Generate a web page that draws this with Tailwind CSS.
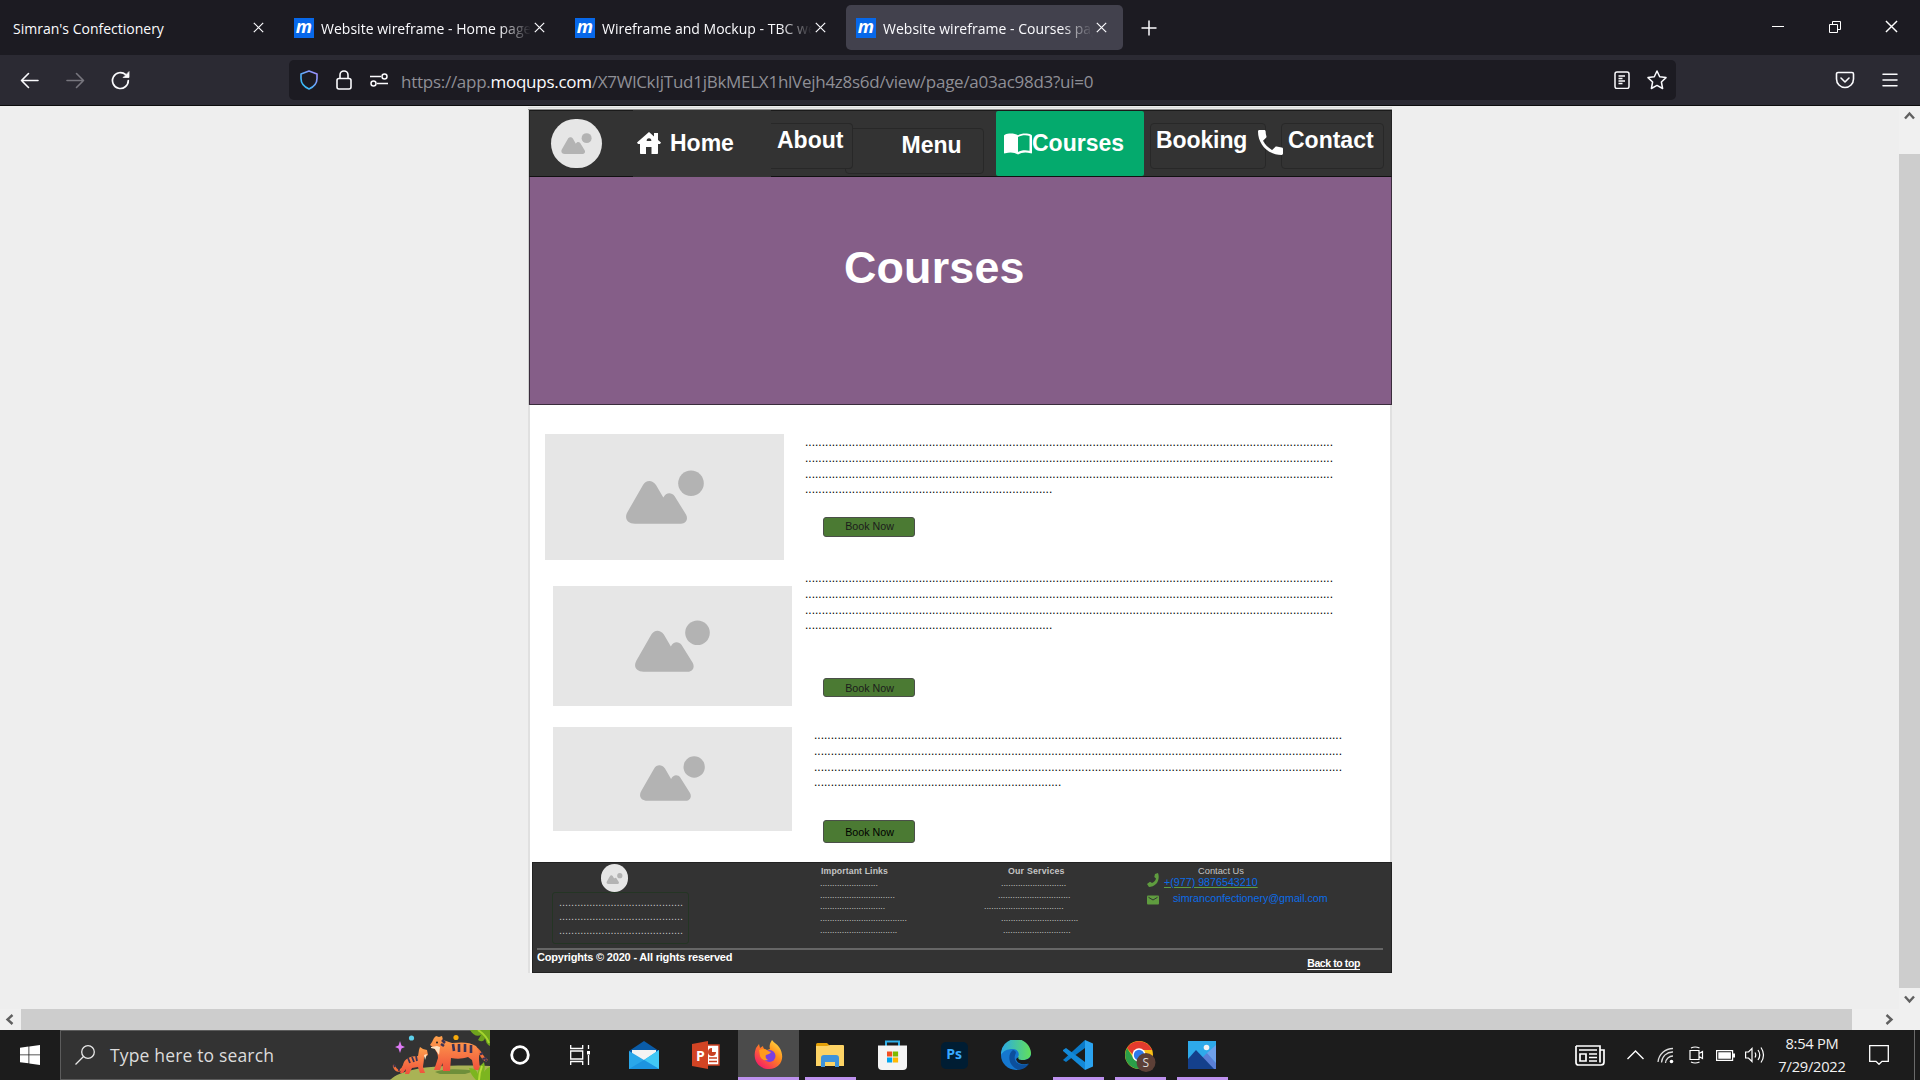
<!DOCTYPE html>
<html lang="en">
<head>
<meta charset="utf-8">
<title>Website wireframe - Courses page</title>
<script src="https://cdn.jsdelivr.net/npm/@tailwindcss/browser@4"></script>
</head>
<body class="w-[1920px] h-[1080px] overflow-hidden flex flex-col bg-[#eeeeee] font-['Open_Sans','Noto_Sans',sans-serif]">
<svg class="hidden">
  <symbol id="pic" viewBox="0 0 78 54"><circle cx="65" cy="13.2" r="12.8"/><path d="M17 15C20 10 26 9.500 30 15L37.300 27.500C40 22 45.500 22 48.500 26L60 44.500C62.500 49 60 53.800 55 53.800H9C1 53.800-2 48 1.500 42Z"/></symbol>
  <symbol id="x" viewBox="0 0 11 11"><path d="M.8.8l9.400 9.400M10.200.8L.8 10.200" fill="none" stroke="currentColor" stroke-width="1.200"/></symbol>
  <symbol id="phone" viewBox="3 3 18 18"><path d="M6.620 10.790c1.440 2.830 3.760 5.140 6.590 6.590l2.200-2.200c.27-.27.67-.36 1.020-.24 1.120.37 2.330.57 3.570.57.55 0 1 .45 1 1V20c0 .55-.45 1-1 1-9.390 0-17-7.610-17-17 0-.55.45-1 1-1h3.500c.55 0 1 .45 1 1 0 1.250.2 2.450.57 3.570.11.35.03.74-.25 1.020l-2.200 2.200z"/></symbol>
</svg>

<!-- tab strip -->
<div class="h-[55px] shrink-0 bg-[#1c1b22] flex items-start pt-[5px] text-[#fbfbfe] text-[14px]">
  <div class="w-[281px] h-[45px] flex items-center pl-[13px]">
    <span class="pt-[2px] w-[240px] whitespace-nowrap">Simran's Confectionery</span>
    <svg class="w-[11px] h-[11px]"><use href="#x"/></svg>
  </div>
  <div class="w-[281px] h-[45px] flex items-center pl-[13px]">
    <span class="w-5 h-5 bg-[#0768ea] text-white font-bold italic text-[18px] leading-[16px] text-center">m</span>
    <span class="ml-[7px] pt-[2px] w-[213px] whitespace-nowrap overflow-hidden tracking-[0.020px] [mask-image:linear-gradient(to_right,black_178px,transparent_210px)]">Website wireframe - Home page</span>
    <svg class="w-[11px] h-[11px]"><use href="#x"/></svg>
  </div>
  <div class="w-[284px] h-[45px] flex items-center pl-[13px]">
    <span class="w-5 h-5 bg-[#0768ea] text-white font-bold italic text-[18px] leading-[16px] text-center">m</span>
    <span class="ml-[7px] pt-[2px] w-[213px] whitespace-nowrap overflow-hidden tracking-[0.020px] [mask-image:linear-gradient(to_right,black_178px,transparent_210px)]">Wireframe and Mockup - TBC website</span>
    <svg class="w-[11px] h-[11px]"><use href="#x"/></svg>
  </div>
  <div class="w-[277px] h-[45px] flex items-center pl-[10px] bg-[#42414d] rounded-[5px]">
    <span class="w-5 h-5 bg-[#0768ea] text-white font-bold italic text-[18px] leading-[16px] text-center">m</span>
    <span class="ml-[7px] pt-[2px] w-[213px] whitespace-nowrap overflow-hidden tracking-[0.020px] [mask-image:linear-gradient(to_right,black_178px,transparent_210px)]">Website wireframe - Courses page</span>
    <svg class="w-[11px] h-[11px]"><use href="#x"/></svg>
  </div>
  <svg class="ml-[18px] mt-[15px] w-4 h-4" viewBox="0 0 16 16"><path d="M8 .5v15M.5 8h15" stroke="#fbfbfe" stroke-width="1.500"/></svg>
  <div class="ml-auto mr-[22px] mt-[15px] flex gap-[45px] h-[14px]">
    <svg class="w-3 h-[14px]"><path d="M0 6.500h12" stroke="#fff"/></svg>
    <svg class="w-3 h-[14px]" fill="none" stroke="#fff"><path d="M.5 4.500h8v8h-8zM3.500 4V1.500h8v8H9"/></svg>
    <svg class="w-[13px] h-[13px] -ml-px text-white"><use href="#x"/></svg>
  </div>
</div>

<!-- toolbar -->
<div class="h-[51px] shrink-0 bg-[#2b2a33] border-b border-[#0c0c0d] flex items-center">
  <div class="w-[289px] pl-[20px] flex gap-[26px] items-center">
    <svg class="w-[19px] h-[19px]" viewBox="0 0 19 19" fill="none" stroke="#fbfbfe" stroke-width="1.600" stroke-linecap="round" stroke-linejoin="round"><path d="M18 9.500H1.500M8.500 2.500l-7 7 7 7"/></svg>
    <svg class="ml-px w-[19px] h-[19px]" viewBox="0 0 19 19" fill="none" stroke="#77767e" stroke-width="1.600" stroke-linecap="round" stroke-linejoin="round"><path d="M1 9.500h16.500M10.500 2.500l7 7-7 7"/></svg>
    <svg class="w-[19px] h-[19px]" viewBox="0 0 19 19" fill="none" stroke="#fbfbfe" stroke-width="1.700" stroke-linecap="round"><path d="M17.300 9.500a7.900 7.900 0 1 1-2.600-5.800"/><path d="M18 1v5.500h-5.500z" fill="#fbfbfe" stroke-width=".8"/></svg>
  </div>
  <div class="w-[1387px] h-10 bg-[#1c1b22] rounded-[5px] flex items-center pl-[10px]">
    <svg class="w-5 h-5" viewBox="0 0 20 20" fill="none"><defs><linearGradient id="sh" x1="0" y1="1" x2="1" y2="0"><stop offset="0" stop-color="#20c5f5"/><stop offset="1" stop-color="#a68bff"/></linearGradient></defs><path d="M10 1l8 3v4.500c0 5-3.500 8.500-8 10.500-4.500-2-8-5.500-8-10.500V4z" stroke="url(#sh)" stroke-width="1.600" stroke-linejoin="round"/></svg>
    <svg class="ml-[16px] w-[18px] h-5" viewBox="0 0 18 20" fill="none" stroke="#fbfbfe" stroke-width="1.600"><rect x="2" y="8.500" width="14" height="10.500" rx="2"/><path d="M5 8.500V5a4 4 0 0 1 8 0v3.500"/></svg>
    <svg class="ml-[17px] w-[18px] h-[14px]" viewBox="0 0 18 14" fill="none" stroke="#fbfbfe" stroke-width="1.500"><path d="M0 3.500h11M7 10.500h11"/><circle cx="14.500" cy="3.500" r="2.500"/><circle cx="3.500" cy="10.500" r="2.500"/></svg>
    <span class="ml-[13px] pt-[4px] w-[1180px] whitespace-nowrap text-[17px] tracking-[-0.265px] text-[#8f8f96]">https://app.<span class="text-[#fbfbfe]">moqups.com</span>/X7WlCkIjTud1jBkMELX1hlVejh4z8s6d/view/page/a03ac98d3?ui=0</span>
    <svg class="ml-[33px] w-4 h-[18px]" viewBox="0 0 16 18" fill="none" stroke="#fbfbfe" stroke-width="1.500"><rect x="1" y="1" width="14" height="16.500" rx="2"/><path d="M4.500 5H11M4.500 7.500h4M4.500 10H11M4.500 12.500h4" stroke-width="1.300"/></svg>
    <svg class="ml-[17px] w-5 h-5" viewBox="0 0 20 20" fill="none" stroke="#fbfbfe" stroke-width="1.500" stroke-linejoin="round"><path d="M10 1l2.700 5.800 6.300.8-4.600 4.400 1.200 6.500-5.600-3.100-5.600 3.100 1.200-6.500L1 7.600l6.300-.8z"/></svg>
  </div>
  <svg class="ml-[159px] w-5 h-[18px]" viewBox="0 0 20 18" fill="none" stroke="#fbfbfe" stroke-width="1.600" stroke-linecap="round" stroke-linejoin="round"><path d="M3 1.500h14a1.500 1.500 0 0 1 1.500 1.500v5a8.500 8.500 0 0 1-17 0V3A1.500 1.500 0 0 1 3 1.500zM6 7l4 4 4-4"/></svg>
  <svg class="ml-[27px] w-4 h-[14px]" viewBox="0 0 16 14" stroke="#fbfbfe" stroke-width="1.500" stroke-linecap="round"><path d="M1 1.200h14M1 7h14M1 12.800h14"/></svg>
</div>

<!-- viewport -->
<div class="h-[903px] shrink-0 flex">
  <div class="w-[1899px] pl-[528px]">
    <main class="w-[864px] h-[868px] font-['Liberation_Sans',Arial,sans-serif]">
      <div class="h-[4px] w-[864px] flex flex-col justify-end">
        <div class="h-px bg-[#dcdcdc]"></div>
        <div class="mt-px h-px bg-[#8f8f8f]"></div>
      </div>
      <!-- header -->
      <div class="w-[864px] border-l border-[#cfcfcf]">
        <nav class="h-[67px] w-[863px] bg-[#333] border border-t-[#1a1a1a] border-x-[#222] border-b-[#111] flex text-white font-bold text-[23px] leading-[33px]">
          <div class="shrink-0 ml-[21px] mt-[8px] w-[51px] h-[49px] rounded-full bg-[#e6e6e6] flex justify-center pt-[14px]"><svg class="w-[31px] h-[21px] fill-[#b3b3b3]"><use href="#pic"/></svg></div>
          <div class="shrink-0 ml-[31px] -my-px w-[138px] bg-[#333] relative z-20 flex items-start pl-[4px]">
            <svg class="mt-[22px] w-[24px] h-[22px] fill-white" viewBox="0 0 24 22"><path d="M12 0L0 10.500l1 1.500h2v9c0 .6.400 1 1 1h5v-7h5.500v7H20c.6 0 1-.4 1-1v-9h2l1-1.500-3-2.600V1h-4v3.600zM12 6.200a2.300 2.300 0 0 1 2.300 2.800H9.700A2.300 2.300 0 0 1 12 6.200z" fill-rule="evenodd"/></svg>
            <span class="ml-[9px] mt-[17px]">Home</span>
          </div>
          <div class="shrink-0 mt-[12px] w-[82px] h-[46px] bg-[#333] border border-l-0 border-[#282828] rounded-r-[4px] pl-[6px] relative z-10">About</div>
          <div class="shrink-0 -ml-[8px] mt-[17px] w-[139px] h-[46px] border border-[#282828] rounded-[4px] pl-[55.500px]">Menu</div>
          <div class="shrink-0 ml-[12px] w-[148px] h-[65px] bg-[#04aa6d] rounded-[2px] flex items-start pl-[8px]">
            <svg class="mt-[22px] w-[28px] h-[22px]" viewBox="0 0 28 22"><path d="M14 2.300C11 .2 4 .2 1.200 1.600 0 2.200 0 2.600 0 3.500v16c0 1.300.8 1 1.500.8 4-1.500 9-1.200 12.500 1.200 3.500-2.400 8.500-2.700 12.500-1.200.7.200 1.500.5 1.500-.8v-16c0-.9 0-1.300-1.200-1.900C24 .2 17 .2 14 2.300zm0 1.700c3.500-2 8.500-2.200 11.500-1v14.700c-4-1-8.500-.7-11.500 1.300z" fill="#fff" fill-rule="evenodd"/></svg>
            <span class="mt-[16px]">Courses</span>
          </div>
          <div class="shrink-0 ml-[6px] mt-[12px] w-[116px] h-[46px] border border-[#282828] rounded-[4px] pl-[5px] tracking-[-0.100px]">Booking</div>
          <svg class="shrink-0 -ml-[8px] mt-[19px] w-[25px] h-[25px] fill-white relative z-10"><use href="#phone"/></svg>
          <div class="shrink-0 -ml-[2px] mt-[12px] w-[103px] h-[46px] border border-[#282828] rounded-[4px] pl-[6px]">Contact</div>
        </nav>
        <h1 class="h-[228px] w-[863px] bg-[#855e88] border-x border-b border-[#3a2c3c] pl-[314px] pt-[62px] text-white font-bold text-[44.800px] leading-[56px] tracking-[0.200px]">Courses</h1>
      </div>

      <!-- course list -->
      <div class="w-[864px] h-[457px] bg-white border-l-2 border-r-2 border-[#e0e0e0] pt-[29px] text-black text-[12px]">
        <section class="h-[136px] flex">
          <div class="ml-[15px] w-[239px] h-[126px] bg-[#e6e6e6] pl-[81px] pt-[36px]"><svg class="w-[78px] h-[54px] fill-[#b3b3b3]"><use href="#pic"/></svg></div>
          <div class="ml-[21px]">
            <div class="w-[530px] h-[63px] leading-[16px] tracking-[0.008px]">
              <p data-dots="158"></p><p data-dots="158"></p><p data-dots="158"></p><p class="-mt-px" data-dots="74"></p>
            </div>
            <button class="block ml-[18px] mt-[20px] w-[92px] h-[20px] bg-[#4b7a33] border border-[#4a4f48] rounded-[3px] text-[10.700px] leading-[16px] pl-px pb-[2px] text-[#1c1c1c]">Book Now</button>
          </div>
        </section>
        <section class="h-[157px] flex">
          <div class="ml-[23px] mt-[16px] w-[239px] h-[120px] bg-[#e6e6e6] pl-[82px] pt-[34px]"><svg class="w-[75px] h-[52px] fill-[#b3b3b3]"><use href="#pic"/></svg></div>
          <div class="ml-[13px]">
            <div class="w-[530px] h-[63px] leading-[16px] tracking-[0.008px]">
              <p data-dots="158"></p><p data-dots="158"></p><p data-dots="158"></p><p class="-mt-px" data-dots="74"></p>
            </div>
            <button class="block ml-[18px] mt-[45px] w-[92px] h-[19px] bg-[#4b7a33] border border-[#4a4f48] rounded-[3px] text-[10.700px] leading-[18px] pl-px text-[#1c1c1c]">Book Now</button>
          </div>
        </section>
        <section class="h-[135px] flex">
          <div class="ml-[23px] w-[239px] h-[104px] bg-[#e6e6e6] pl-[87px] pt-[29px]"><svg class="w-[65px] h-[45px] fill-[#b3b3b3]"><use href="#pic"/></svg></div>
          <div class="ml-[22px]">
            <div class="w-[530px] h-[63px] leading-[16px] tracking-[0.008px]">
              <p data-dots="158"></p><p data-dots="158"></p><p data-dots="158"></p><p class="-mt-px" data-dots="74"></p>
            </div>
            <button class="block ml-[9px] mt-[30px] w-[92px] h-[23px] bg-[#4b7a33] border border-[#4a4f48] rounded-[3px] text-[10.700px] leading-[22px] pl-px text-black">Book Now</button>
          </div>
        </section>
      </div>

      <!-- footer -->
      <div class="w-[864px] border-l-2 border-[#e0e0e0] pl-[2px] bg-white">
        <footer class="w-[860px] h-[111px] bg-[#333] border border-[#222] text-[#c4c4c4]">
          <div class="h-[85px] flex text-[8.700px] leading-[12px]">
            <div class="w-[287px] pl-[19px]">
              <div class="ml-[49px] mt-[1px] w-[27px] h-[28px] rounded-full bg-[#e6e6e6] flex justify-center pt-[9px]"><svg class="w-[17px] h-[11px] fill-[#b3b3b3]"><use href="#pic"/></svg></div>
              <div class="w-[137px] h-[52px] border border-[#243524] rounded-[3px] pl-[6px] pt-[1.500px] text-[10.900px] leading-[14px]">
                <p data-dots="41"></p><p data-dots="41"></p><p data-dots="41"></p>
              </div>
            </div>
            <div class="w-[164px] pt-[2px] leading-[11.700px]">
              <h2 class="font-bold text-[8.700px] leading-[12px] tracking-[0.120px] pl-px pb-[1px]">Important Links</h2>
              <p data-dots="24"></p><p data-dots="31"></p><p data-dots="27"></p><p data-dots="36"></p><p data-dots="32"></p>
            </div>
            <div class="w-[163px] pt-[2px] leading-[11.700px]">
              <h2 class="font-bold text-[8.800px] leading-[12px] tracking-[0.200px] pl-[24px] pb-[1px]">Our Services</h2>
              <p class="pl-[17px]" data-dots="27"></p><p class="pl-[14px]" data-dots="30"></p><p data-dots="33"></p><p class="pl-[17px]" data-dots="32"></p><p class="pl-[19px]" data-dots="28"></p>
            </div>
            <div class="pt-[2px]">
              <h2 class="pl-[51px] text-[9.300px]">Contact Us</h2>
              <div class="flex h-[14px] text-[10.700px] leading-[11px] text-[#0b6ce8]">
                <svg class="-mt-[4px] w-[12px] h-[14px] fill-[#5f9c3f]" viewBox="0 0 12 14"><path d="M8 1l3-1c1.500 4 .5 8-1.500 10.500C7.500 13 4 14 2 14L0 11l3-2.300 2 1.300C7 9 8.500 7.500 9 5.500L7.300 4z"/></svg>
                <a class="ml-[5px] underline decoration-[#5f9c3f] decoration-1 underline-offset-1 whitespace-nowrap">+(977) 9876543210</a>
              </div>
              <div class="flex mt-[1px] text-[10.700px] leading-[12px] text-[#0b6ce8]">
                <svg class="mt-[3px] w-[12px] h-[10px]" viewBox="0 0 12 10"><rect y=".5" width="12" height="9" rx="1" fill="#5f9c3f"/><path d="M1.500 2.300L6 5l4.500-2.700" fill="none" stroke="#333"/></svg>
                <a class="ml-[14px] tracking-[-0.020px]">simranconfectionery@gmail.com</a>
              </div>
            </div>
          </div>
          <div class="ml-[4px] w-[846px] h-[2px] bg-[#666]"></div>
          <div class="flex justify-between pl-[4px] pr-[31px] text-white font-bold text-[11px] leading-[12px]">
            <span class="mt-[1px] tracking-[-0.190px]">Copyrights © 2020 - All rights reserved</span>
            <a class="mt-[7px] text-[10.500px] tracking-[-0.400px] underline underline-offset-[1.500px]">Back to top</a>
          </div>
        </footer>
      </div>
    </main>
  </div>
  <div class="w-[21px] bg-[#f0f0f0] flex flex-col items-center">
    <svg class="mt-[5px] w-[11px] h-[9px]" viewBox="0 0 11 9" fill="none" stroke="#606060" stroke-width="2.400"><path d="M1 7.500L5.500 2.500 10 7.500"/></svg>
    <div class="mt-[34px] w-full h-[834px] bg-[#cdcdcd]"></div>
    <svg class="mt-[7px] w-[11px] h-[9px]" viewBox="0 0 11 9" fill="none" stroke="#606060" stroke-width="2.400"><path d="M1 1.500L5.500 6.500 10 1.500"/></svg>
  </div>
</div>
<div class="h-[21px] shrink-0 bg-[#f0f0f0] flex items-center">
  <svg class="ml-[5px] w-[9px] h-[11px]" viewBox="0 0 9 11" fill="none" stroke="#606060" stroke-width="2.400"><path d="M7.500 1L2.500 5.500 7.500 10"/></svg>
  <div class="ml-[7px] w-[1831px] h-full bg-[#cdcdcd]"></div>
  <svg class="ml-[33px] w-[9px] h-[11px]" viewBox="0 0 9 11" fill="none" stroke="#606060" stroke-width="2.400"><path d="M1.500 1L6.500 5.500 1.500 10"/></svg>
</div>

<!-- taskbar -->
<div class="h-[50px] shrink-0 bg-[#1c1c1c] flex items-center text-white">
  <div class="w-[60px] flex justify-center"><svg class="w-5 h-5" viewBox="0 0 20 20" fill="#fff"><path d="M0 2.800L8.500 1.600V9.500H0zM9.300 1.500L20 0v9.500H9.300zM0 10.300h8.500v8L0 17.200zM9.300 10.300H20V20L9.300 18.400z"/></svg></div>
  <div class="w-[430px] h-[50px] bg-[#333] border border-[#5c5c5c] border-r-0 flex items-center pl-[14px]">
    <svg class="w-5 h-5" viewBox="0 0 20 20" fill="none" stroke="#e8e8e8" stroke-width="1.300"><circle cx="13" cy="7" r="6.300"/><path d="M8.500 11.500L.5 19.500"/></svg>
    <span class="ml-[15px] w-[280px] text-[17.500px] text-[#dcdcdc] tracking-[0.160px]">Type here to search</span>
    <svg class="w-[100px] h-[50px]" viewBox="0 0 100 50">
      <defs><linearGradient id="tg" x1="0" y1="0" x2="0" y2="1"><stop offset="0" stop-color="#ffa34d"/><stop offset="1" stop-color="#f0503c"/></linearGradient></defs>
      <path d="M0 50C12 39 40 34 100 36V50z" fill="#a9b355"/><path d="M45 42c10-4 30-3 40-1l-10 3H50z" fill="#6f8f3a"/>
      <path d="M86 19c5 2 5 9 10 11" stroke="#f4713c" stroke-width="3" fill="none" stroke-linecap="round"/><path d="M90 24.500l3-1.500M92.500 29l4-1M95 31l2-1" stroke="#3b3355" stroke-width="2"/>
      <path d="M42 12l2-4 2-2 3 1 3-1 1 4 9 3c10-1 18-1 24 3 4 5 3 10 3 14l1 10h-6l-2-10-4-3c-6 2-11 2-17 1l-1 13h-7l-.5-8-2.500 7h-6l4-12c0-5-2-7-4-10l-4-3z" fill="url(#tg)"/>
      <path d="M41 17l6-1 3 1-1 8-4-6-4-1z" fill="#ffe1c0"/><circle cx="47" cy="12.500" r="1" fill="#222"/>
      <path d="M63 14l1 7M69 14v8M75 14v8M81 15v8M52 10l3 3M51 14l3 2" stroke="#3b3355" stroke-width="2.600"/>
      <path d="M14 36c-3 6-8 6-10 0" stroke="#f4713c" stroke-width="2.400" fill="none" stroke-linecap="round"/><path d="M4 35l1 2M8 40l2-.5" stroke="#3b3355" stroke-width="2"/>
      <path d="M13 35c1-6 7-9 15-9l1-6 1-3 3 2 4 1 1 5-4 2c0 5-1 8-1 10l2 6h-5l-2-6-6 1-3 6h-4l1-5-3 4h-3z" fill="url(#tg)"/>
      <path d="M18 28l2 5M22 27l2 5M26 26l1 5" stroke="#3b3355" stroke-width="1.800"/><path d="M34 25l3-1-2 6z" fill="#ffe1c0"/>
      <path d="M10 11l1.500 4.500L15 17l-3.500 1.500L10 23l-1.500-4.500L5 17l3.500-1.500z" fill="#df7af5"/>
      <circle cx="21.500" cy="8" r="2.600" fill="#5dd0ea"/><circle cx="66" cy="7.500" r="2.600" fill="#f8ab0c"/>
      <path d="M80 0h20v16c-4-2-4-5-5-8-1 4-4 4-7 2l3-5c-4 2-8 0-11-5z" fill="#6ea31d"/><path d="M88 0c6 4 9 7 11 13" stroke="#a5d52d" stroke-width="2" fill="none"/>
      <path d="M79 38c6 0 8 3 9 6 0-6 3-9 6-12 1 4 1 7 0 10 2-3 3-4 6-5v13H86c-3-3-6-7-7-12z" fill="#7cb51f"/><path d="M92 36c-2 5-3 8-3 14" stroke="#b6dd37" stroke-width="2" fill="none"/>
    </svg>
  </div>
  <div class="w-[60px] flex justify-center"><svg class="w-5 h-5"><circle cx="10" cy="10" r="8.300" fill="none" stroke="#fff" stroke-width="2.800"/></svg></div>
  <div class="w-[60px] mr-[3px] flex justify-center"><svg class="w-5 h-5" viewBox="0 0 20 20" fill="none" stroke="#fff" stroke-width="1.300"><path d="M.7 0v3.500h12V0M.7 20v-3.500h12V20M.7 6h12v8H.7zM18.500 0v4M18.500 10v10"/><path d="M17 6h3v3.500h-3z" fill="#fff" stroke="none"/></svg></div>
  <div class="w-[62px] flex justify-center"><svg class="w-[30px] h-[28px]" viewBox="0 0 30 28"><path d="M0 10L15 0l15 10v4H0z" fill="#0a5ca8"/><path d="M3 9h24v8L15 22 3 17z" fill="#f3f3f3"/><path d="M0 10l15 9L30 9v19H0z" fill="#2aa7ea"/><path d="M15 19L30 9v19z" fill="#41c8f5"/><path d="M15 19l15 9H0z" fill="#1c94e0"/></svg></div>
  <div class="w-[62px] flex justify-center"><svg class="w-[28px] h-[28px]" viewBox="0 0 28 28"><path d="M14 4h13v20H14z" fill="#fff" stroke="#c94022" stroke-width="1.500"/><path d="M17 17h8M17 20.500h8" stroke="#c94022" stroke-width="1.500"/><path d="M20 7a4 4 0 1 0 4 4h-4z" fill="#c94022"/><path d="M0 3L16 0v28L0 25z" fill="#d14424"/><text x="4" y="19.500" font-size="14" font-weight="700" fill="#fff">P</text></svg></div>
  <div class="ml-px w-[61px] h-[50px] bg-[#4b4b4b] border-b-[3px] border-[#bd91ee] flex justify-center pt-[10px]"><svg class="w-[30px] h-[29px]" viewBox="0 0 30 29"><defs><linearGradient id="ff" x1="1" y1="0" x2=".2" y2="1"><stop offset="0" stop-color="#fff04a"/><stop offset=".45" stop-color="#ff8a1c"/><stop offset="1" stop-color="#f5156c"/></linearGradient></defs><path d="M18 0c2 3 5 4 7 7 7 10 2 22-10 22S-2 18 2 8l3-4 1 4 3-2c0 2 1 3 4 4l3-1c-1-3 0-6 2-9z" fill="url(#ff)"/><circle cx="15.500" cy="16" r="6" fill="#7a3fe0"/><path d="M5 10c4-2 7-1 9 1l3 1c-1 2-3 2-5 3-1 2 0 4 2 5-4 1-7-1-8-4z" fill="#ff9a1c"/></svg></div>
  <div class="w-[62px] h-[50px] flex justify-center"><div class="w-[51px] h-[50px] border-b-[3px] border-[#bd91ee] flex justify-center pt-[13px]"><svg class="w-[28px] h-[24px]" viewBox="0 0 28 24"><path d="M0 1.500Q0 0 1.500 0H11l3 3H0z" fill="#e3a008"/><path d="M0 3h11l3-1h13q1 0 1 1v20H0z" fill="#fdd365"/><path d="M5 24v-9q0-3 3-3h12q3 0 3 3v9h-4v-5H9v5z" fill="#3e93dc"/></svg></div></div>
  <div class="w-[62px] flex justify-center"><svg class="w-[29px] h-[30px]" viewBox="0 0 29 30"><path d="M8 6V1.500h13V6" fill="none" stroke="#2fb0ea" stroke-width="2"/><path d="M0 5.500h29V26q0 4-4 4H4q-4 0-4-4z" fill="#f4f4f4"/><path d="M9 11.500h5.200v5H9z" fill="#f25022"/><path d="M14.900 11.500h5.200v5h-5.200z" fill="#7fba00"/><path d="M9 17.500h5.200v5H9z" fill="#00a4ef"/><path d="M14.900 17.500h5.200v5h-5.200z" fill="#ffb900"/></svg></div>
  <div class="w-[62px] flex justify-center"><div class="w-[27px] h-[27px] rounded-[5px] bg-[#001d33] text-[#38a8ff] text-[14px] leading-[24px] font-bold text-center">Ps</div></div>
  <div class="w-[62px] flex justify-center"><svg class="w-[30px] h-[30px]" viewBox="0 0 30 30"><defs><linearGradient id="eg"><stop offset="0" stop-color="#2aa8e8"/><stop offset="1" stop-color="#62e05a"/></linearGradient></defs><circle cx="15" cy="15" r="15" fill="#1577cf"/><path d="M0 15A15 15 0 0 1 30 13c0 5-4 7-8 7s-6-1-5-3c2-3 0-8-5-8C6 9 2 11 0 15z" fill="url(#eg)"/><path d="M12 10c-6 4-5 16 5 19.500 5 .5 9-2.500 11-6-8 4-16-1-14-8 1-3 2-4-2-5.500z" fill="#0c4f9c"/><path d="M17.500 17c-1 3 2 3 5 3s7-2 7.500-5v4l-2 4.500c-6 2-12 0-13-4.500z" fill="#1c1c1c"/></svg></div>
  <div class="w-[62px] h-[50px] flex justify-center"><div class="w-[51px] h-[50px] border-b-[3px] border-[#bd91ee] flex justify-center pt-[10px]"><svg class="w-[30px] h-[30px]" viewBox="0 0 30 30"><path d="M0 20L3 22 22 8V0z" fill="#0a7ac9"/><path d="M0 10l3-2 19 14v8L0 11z" fill="#1389d8"/><path d="M22 0l8 3.500v23L22 30z" fill="#2ba3f0"/></svg></div></div>
  <div class="w-[62px] h-[50px] flex justify-center"><div class="w-[51px] h-[50px] border-b-[3px] border-[#bd91ee] flex justify-center pt-[11px]"><svg class="ml-px w-[31px] h-[31px]" viewBox="0 0 31 31"><circle cx="14" cy="14" r="14" fill="#fbc116"/><path d="M2 7a14 14 0 0 1 24 0l1 2H14l-5 6z" fill="#e33b2e"/><path d="M2 7a14 14 0 0 0 12 21l5-10-10 0z" fill="#2b9f48"/><circle cx="14" cy="14" r="6.700" fill="#fff"/><circle cx="14" cy="14" r="5.200" fill="#2f79ea"/><circle cx="21" cy="21.500" r="9.500" fill="#5d4037"/><text x="17.600" y="26" font-size="12" fill="#ddd">S</text></svg></div></div>
  <div class="w-[62px] h-[50px] flex justify-center"><div class="w-[51px] h-[50px] border-b-[3px] border-[#bd91ee] flex justify-center pt-[11px]"><svg class="w-[28px] h-[28px]" viewBox="0 0 28 28"><path d="M0 0h28v28H0z" fill="#2eaaea"/><path d="M13 18l6-6 9 10v6H13z" fill="#5a7fd6"/><path d="M28 4v18l-9-10z" fill="#6fa0ea"/><path d="M0 18l8-9 18 19H0z" fill="#14408c"/><circle cx="18.500" cy="6.500" r="2.800" fill="#f4f4f4"/></svg></div></div>
  <div class="ml-auto flex items-center h-[50px]">
    <svg class="w-[30px] h-[21px]" viewBox="0 0 30 21" fill="none" stroke="#fff" stroke-width="1.700"><path d="M1 1h24v16.500M25 5h4v12q0 3-3 3H3.500Q1 20 1 17.500V1M4 5h18M14 9h8M14 12.500h8M14 16h8"/><path d="M5 9h6v7H5z"/></svg>
    <svg class="ml-[22px] w-[17px] h-[10px]" viewBox="0 0 17 10" fill="none" stroke="#fff" stroke-width="1.400"><path d="M.5 9l8-8 8 8"/></svg>
    <svg class="ml-[13px] w-[17px] h-[17px]" viewBox="0 0 17 17" fill="none" stroke="#ddd" stroke-width="1.300"><path d="M1 15A15 15 0 0 1 16 1.500M4.500 15.500A11 11 0 0 1 16 5M8.500 16A7.500 7.500 0 0 1 16 9"/><circle cx="14.500" cy="14.500" r="1.800" fill="#fff" stroke="none"/></svg>
    <svg class="ml-[15px] w-[15px] h-[18px]" viewBox="0 0 15 18" fill="none" stroke="#fff" stroke-width="1.200"><path d="M1 4.500h9v9H1zM10 7.500l3.500-2v7l-3.500-2M2 2q4-2 8.500 0M2 16q4 2 8.500 0"/></svg>
    <svg class="ml-[12px] w-[19px] h-[11px]" viewBox="0 0 19 11"><path d="M.6.600h16v9.800H.6z" fill="none" stroke="#fff" stroke-width="1.200"/><path d="M2.300 2.300h12.600v6.400H2.300zM17 3.500h2v4h-2z" fill="#fff"/></svg>
    <svg class="ml-[10px] w-[20px] h-[18px]" viewBox="0 0 20 18" fill="none" stroke="#fff" stroke-width="1.200"><path d="M.6 6h2.900L7 2.500v13L3.500 12H.6zM10 6.500q1.500 2.500 0 5M13 4q3.500 5 0 10M16 1.500q5 7.500 0 15"/></svg>
    <div class="ml-[10px] w-[74px] text-center text-[14.700px] leading-[23px] tracking-[-0.250px] text-[#f2f2f2] whitespace-nowrap">8:54 PM<br>7/29/2022</div>
    <svg class="ml-[20px] w-[20px] h-[20px]" viewBox="0 0 20 20" fill="none" stroke="#fff" stroke-width="1.300"><path d="M.7.700h18.600v15.600h-6.300L10 19.300l-3-3H.7z"/></svg>
    <div class="ml-[25px] mr-[5px] w-px h-[50px] bg-[#6a6a6a]"></div>
  </div>
</div>
<script>
document.querySelectorAll('[data-dots]').forEach(function (el) { el.textContent = '.'.repeat(+el.dataset.dots); });
</script>
</body>
</html>
